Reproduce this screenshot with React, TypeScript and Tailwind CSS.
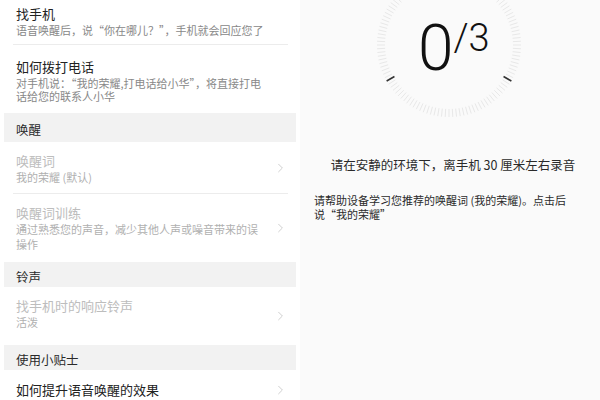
import { ChevronRight } from 'lucide-react';

const FONT = { fontFamily: '"Noto Sans CJK SC", "Noto Sans", sans-serif' };

function Header({ label, h }: { label: string; h: string }) {
  return (
    <div className={`mx-1 shrink-0 bg-[#f2f2f2] px-3 flex items-center pt-[5px] text-[12.5px] text-[#2a2a2a] ${h}`}>
      {label}
    </div>
  );
}

function Row({
  title,
  sub,
  dim,
  arrow,
  divider,
  h,
  pt,
}: {
  title: string;
  sub?: string;
  dim?: boolean;
  arrow?: boolean;
  divider?: boolean;
  h: string;
  pt: string;
}) {
  return (
    <div className={`relative shrink-0 flex items-start pl-4 pr-[14px] ${h} ${pt}`}>
      <div className="flex-1 min-w-0">
        <div className={`text-[13px] leading-[17px] ${dim ? 'text-[#bdbdbd]' : 'text-[#222]'}`}>{title}</div>
        {sub && (
          <div className={`text-[11px] leading-[15px] mt-[1px] w-[250px] ${dim ? 'text-[#b0b0b0]' : 'text-[#888]'}`}>
            {sub}
          </div>
        )}
      </div>
      {arrow && (
        <ChevronRight
          className="absolute right-[12px] top-1/2 -translate-y-1/2 size-[15px] text-[#cccccc]"
          strokeWidth={1.5}
        />
      )}
      {divider && <div className="absolute bottom-0 left-[13px] right-[12px] h-px bg-[#ececec]" />}
    </div>
  );
}

function Dial() {
  const cx = 90;
  const cy = 90;
  const ticks = [];
  const n = 120;
  for (let i = 0; i < n; i++) {
    const a = (i / n) * Math.PI * 2;
    ticks.push(
      <line
        key={i}
        x1={cx + Math.cos(a) * 64}
        y1={cy + Math.sin(a) * 64}
        x2={cx + Math.cos(a) * 72}
        y2={cy + Math.sin(a) * 72}
        stroke="#e8e8e8"
        strokeWidth={1}
      />,
    );
  }
  const dark = [150, 30].map((deg) => {
    const a = (deg * Math.PI) / 180;
    return (
      <line
        key={deg}
        x1={cx + Math.cos(a) * 63}
        y1={cy + Math.sin(a) * 63}
        x2={cx + Math.cos(a) * 72}
        y2={cy + Math.sin(a) * 72}
        stroke="#333"
        strokeWidth={1.6}
      />
    );
  });
  return (
    <svg width="180" height="180" viewBox="0 0 180 180" className="absolute left-[59px] top-[-45px]">
      {ticks}
      {dark}
    </svg>
  );
}

export default function App() {
  return (
    <div className="w-[600px] h-[400px] flex overflow-hidden bg-white" style={FONT}>
      <div className="w-[300px] h-full bg-white flex flex-col">
        <Row title="找手机" sub="语音唤醒后，说“你在哪儿？”，手机就会回应您了" divider h="h-[45px]" pt="pt-[5px]" />
        <div className="relative pl-4 pr-[14px] pt-[13px] h-[68px] shrink-0">
          <div className="text-[13px] leading-[17px] text-[#222]">如何拨打电话</div>
          <div className="text-[11px] leading-[13px] mt-[2px] text-[#888] w-[250px]">
            对手机说：“我的荣耀,打电话给小华”，将直接打电话给您的联系人小华
          </div>
        </div>
        <Header label="唤醒" h="h-[29px]" />
        <Row title="唤醒词" sub="我的荣耀 (默认)" dim arrow divider h="h-[52px]" pt="pt-[10px]" />
        <Row
          title="唤醒词训练"
          sub="通过熟悉您的声音，减少其他人声或噪音带来的误操作"
          dim
          arrow
          h="h-[68px]"
          pt="pt-[10px]"
        />
        <Header label="铃声" h="h-[25px]" />
        <Row title="找手机时的响应铃声" sub="活泼" dim arrow h="h-[58px]" pt="pt-[10px]" />
        <Header label="使用小贴士" h="h-[25px]" />
        <Row title="如何提升语音唤醒的效果" arrow h="h-[40px]" pt="pt-[11px]" />
      </div>
      <div className="w-[300px] h-full bg-[#fafafa] flex flex-col">
        <div className="relative h-[120px] shrink-0">
          <Dial />
          <div className="absolute left-[118px] top-[17px] flex items-start text-[#111]" style={{ fontFamily: 'Roboto, sans-serif' }}>
            <span className="text-[64px] leading-[64px] font-light">0</span>
            <span className="text-[38px] leading-[38px] font-light mt-[2px]">/3</span>
          </div>
        </div>
        <div className="mt-[36px] text-center text-[12.5px] text-[#2a2a2a] pl-[6px]">
          请在安静的环境下，离手机 30 厘米左右录音
        </div>
        <div className="mt-[18px] pl-[14px] pr-[30px] text-[11px] leading-[14px] text-[#2a2a2a]">
          请帮助设备学习您推荐的唤醒词 (我的荣耀)。点击后说“我的荣耀”
        </div>
      </div>
    </div>
  );
}
